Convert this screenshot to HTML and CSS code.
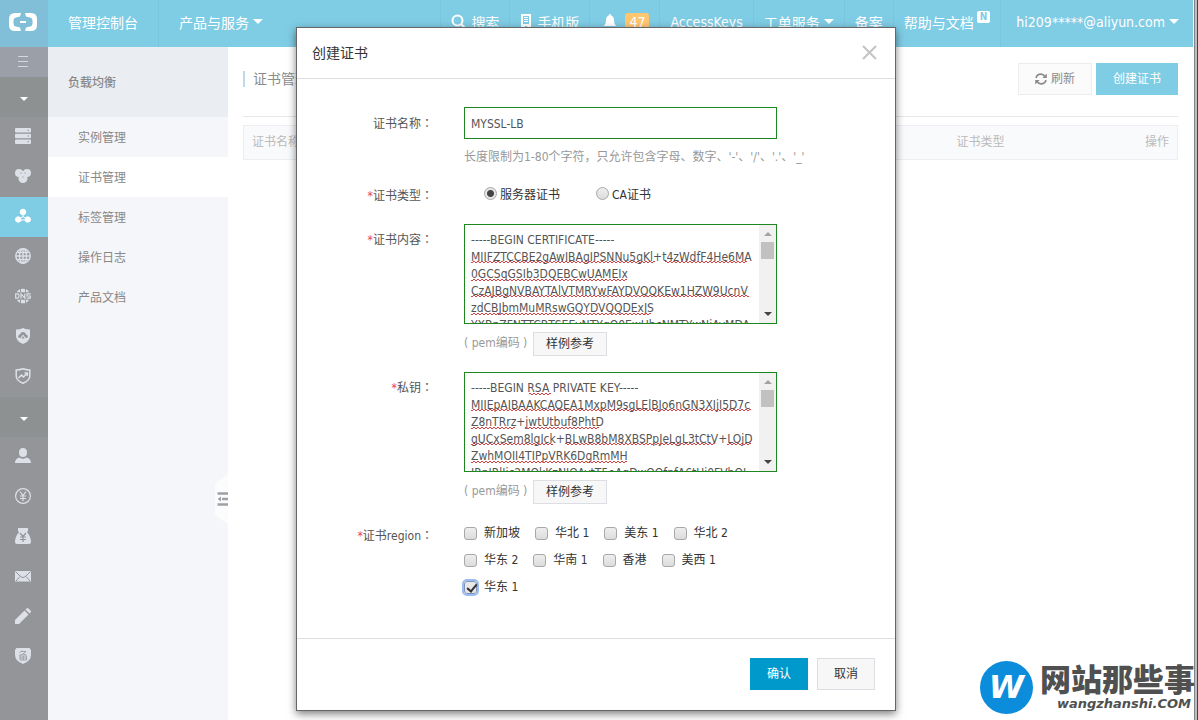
FILE: index.html
```html
<!DOCTYPE html>
<html lang="zh-CN">
<head>
<meta charset="utf-8">
<title>负载均衡 - 证书管理</title>
<link rel="stylesheet" href="styles.css">
</head>
<body>
<div class="window">
  <header class="topbar">
    <a class="brand" href="#" aria-label="首页">
      <svg width="28" height="18" viewBox="0 0 28 18" fill="#fff"><path d="M12 0H6Q0 0 0 6v6q0 6 6 6h6l-1-3.400-4-1Q4.500 13 4.500 10.500v-3Q4.500 5 7 4.400l4-1zM16 0h6q6 0 6 6v6q0 6-6 6h-6l1-3.400 4-1q2.500-.600 2.500-3.100v-3Q23.500 5 21 4.400l-4-1z"/><path d="M11 8h6v2h-6z"/></svg>
    </a>
    <nav class="nav-left">
      <a class="nav-item" href="#">管理控制台</a>
      <a class="nav-item" href="#">产品与服务<i class="caret"></i></a>
    </nav>
    <nav class="nav-right">
      <a class="nav-item" href="#"><svg class="lead" width="15" height="15" viewBox="0 0 15 15" fill="none" stroke="#fff" stroke-width="2"><circle cx="6.500" cy="6.500" r="5"/><path d="M10 10l4.500 4.500"/></svg>搜索</a>
      <a class="nav-item" href="#"><svg class="lead" width="12" height="15" viewBox="0 0 12 15"><path fill="#fff" fill-rule="evenodd" d="M1 0h10v15H1zM3 2v8h6V2zM5 12v1.500h2V12z"/><path d="M4 3.500h4M4 5.500h4M4 7.500h4" stroke="#fff"/></svg>手机版</a>
      <a class="nav-item" href="#"><svg class="bell" width="14" height="15" viewBox="0 0 14 15" fill="#fff"><path d="M7 0q1.300 0 1.300 1.500Q11 2.500 11 6q0 4.500 2.500 6H.500Q3 10.500 3 6q0-3.500 2.700-4.500Q5.700 0 7 0zM5 13h4q-.500 2-2 2t-2-2z"/></svg><span class="count">47</span></a>
      <a class="nav-item" href="#">AccessKeys</a>
      <a class="nav-item" href="#">工单服务<i class="caret"></i></a>
      <a class="nav-item" href="#">备案</a>
      <a class="nav-item" href="#">帮助与文档<span class="new">N</span></a>
      <a class="nav-item user" href="#">hi209*****@aliyun.com<i class="caret"></i></a>
    </nav>
  </header>

  <div class="layout">
    <nav class="rail" aria-label="产品">
      <button class="rail-cell menu" aria-label="菜单"><svg width="12" height="12" viewBox="0 0 12 12" stroke="#d3d7de"><path d="M1 .500h10M1 5.500h10M1 10.500h10"/></svg></button>
      <button class="rail-cell fold" aria-label="产品与服务"><i class="caret small"></i></button>
      <a class="rail-cell" href="#" aria-label="服务器"><svg width="16" height="16" viewBox="0 0 16 16"><g fill="#dde0e6"><rect width="16" height="4.600" rx="1"/><rect y="5.700" width="16" height="4.600" rx="1"/><rect y="11.400" width="16" height="4.600" rx="1"/></g><path d="M12.500 2.300h1.500M12.500 8h1.500M12.500 13.700h1.500" stroke="#939599"/></svg></a>
      <a class="rail-cell" href="#" aria-label="数据库"><svg width="16" height="16" viewBox="0 0 16 16" fill="#dde0e6"><circle cx="4" cy="5" r="4"/><circle cx="12" cy="5" r="4"/><circle cx="8" cy="10.500" r="4.500"/><path d="M4 3h8v6H4z"/><g fill="#a5a8ad"><circle cx="6" cy="5" r=".7"/><circle cx="10" cy="5" r=".7"/><circle cx="8" cy="9" r=".7"/></g></svg></a>
      <a class="rail-cell active" href="#" aria-label="负载均衡"><svg width="16" height="16" viewBox="0 0 16 16" fill="#fff" stroke="#fff"><circle cx="8" cy="4" r="2.800"/><circle cx="3.200" cy="11.500" r="2.700"/><circle cx="12.800" cy="11.500" r="2.700"/><path d="M8 4v4.500L3 12h10L8 8.500" fill="none"/></svg></a>
      <a class="rail-cell" href="#" aria-label="CDN"><svg width="16" height="16" viewBox="0 0 16 16" fill="none" stroke="#dde0e6" stroke-width="1.400"><circle cx="8" cy="8" r="7.200"/><ellipse cx="8" cy="8" rx="3.500" ry="7.200"/><path d="M8 1v14M1 8h14M2.500 4.500h11M2.500 11.500h11"/></svg></a>
      <a class="rail-cell" href="#" aria-label="DNS"><svg width="16" height="16" viewBox="0 0 16 16" fill="none" stroke="#dde0e6"><path d="M1.800 4.200a7.200 7.200 0 0 1 12.400 0zM1.800 11.800a7.200 7.200 0 0 0 12.400 0z" fill="#dde0e6" stroke="none"/><path d="M5.500 1v3.500M10.500 1v3.500M5.500 11.500V15M10.500 11.500V15" stroke="#939599" stroke-width=".9"/><path d="M.700 5.900v4.200h1.800q1.500 0 1.500-2.100T2.500 5.900zM6 10.700V5.900l3.800 4.200V5.400M15.700 5.900H12V8h3.300v2.100h-3.700" stroke-width="1.200"/></svg></a>
      <a class="rail-cell" href="#" aria-label="云盾"><svg width="16" height="16" viewBox="0 0 16 16"><path fill="#dde0e6" d="M8 0q3 1.500 7 1.500V8q0 5-7 8Q1 13 1 8V1.500Q5 1.500 8 0z"/><path fill="#939599" d="M3.200 9.500q-.500-2.500 1.800-3.300Q6 4 8 4t3 2.200q2.300.800 1.800 3.300l-2 .500L8 6.500 5.200 10z"/><path fill="#939599" d="M8 8l1.500 2.500h-3z"/></svg></a>
      <a class="rail-cell" href="#" aria-label="监控"><svg width="16" height="16" viewBox="0 0 16 16" fill="none" stroke="#dde0e6" stroke-width="1.500"><path d="M8 .800q3 1.200 6.800 1.200V8q0 4.500-6.800 7.300Q1.200 12.500 1.200 8V2Q5 2 8 .800z"/><path d="M3.500 10l3-3 2 2L12 5.200M9.500 5h2.800v3"/></svg></a>
      <button class="rail-cell fold" aria-label="用户中心"><i class="caret small"></i></button>
      <a class="rail-cell" href="#" aria-label="账号"><svg width="16" height="16" viewBox="0 0 16 16" fill="#dde0e6"><path d="M8 0q4 0 4 4.500Q12 9 8 9T4 4.500Q4 0 8 0z"/><path d="M0 15q0-4.500 4.500-5.500Q8 12 11.500 9.500 16 10.500 16 15z"/></svg></a>
      <a class="rail-cell" href="#" aria-label="费用"><svg width="16" height="16" viewBox="0 0 16 16" fill="none" stroke="#dde0e6" stroke-width="1.200"><circle cx="8" cy="8" r="7.400"/><path d="M5 3.500l3 4 3-4M8 7.500V13M5 8h6M5 10.500h6"/></svg></a>
      <a class="rail-cell" href="#" aria-label="续费"><svg width="16" height="16" viewBox="0 0 16 16"><path fill="#dde0e6" d="M3 0h10v3l-1 1q4 5 4 10 0 2-2 2H2q-2 0-2-2 0-5 4-10L3 3z"/><path d="M5 5l3 3.500L11 5M8 8.500V14M5 9h6M5 11.500h6" fill="none" stroke="#939599" stroke-width="1.200"/></svg></a>
      <a class="rail-cell" href="#" aria-label="消息"><svg width="16" height="16" viewBox="0 0 16 16"><path fill="#dde0e6" d="M0 3h16v10.500H0z"/><path d="M.500 3.500Q6 9.500 8 9.500t7.500-6M1 13l4-4.500M15 13l-4-4.500" fill="none" stroke="#939599"/></svg></a>
      <a class="rail-cell" href="#" aria-label="工单"><svg width="16" height="16" viewBox="0 0 16 16" fill="#dde0e6"><path d="M0 16v-4L9.500 2.500l4 4L4 16zM10.500 1.500l1-1q1-1 2 0l2 2q1 1 0 2l-1 1z"/></svg></a>
      <a class="rail-cell" href="#" aria-label="备案"><svg width="16" height="16" viewBox="0 0 16 16"><path fill="#dde0e6" d="M1.500 0h13L16 2v5q0 6-8 9Q0 13 0 7V2z"/><path d="M7 2.500L4.500 5M6 3.500h5L8 6l3.500 1M8 6L4 7.500M5 8h6.500v4H5zM5 10h6.500M8.200 8v4" fill="none" stroke="#939599" stroke-width=".8"/></svg></a>
    </nav>

    <aside class="panel">
      <h2 class="panel-title">负载均衡</h2>
      <a class="panel-item" href="#">实例管理</a>
      <a class="panel-item current" href="#">证书管理</a>
      <a class="panel-item" href="#">标签管理</a>
      <a class="panel-item" href="#">操作日志</a>
      <a class="panel-item" href="#">产品文档</a>
      <button class="collapse" aria-label="收起"><svg width="13" height="50" viewBox="0 0 13 50"><path fill="#fcfcfd" d="M13 0v50L0 41V9z"/><path d="M2.500 19.500H13M7 25h6M2.500 30.500H13" stroke="#9da0a6" stroke-width="2.500"/><path fill="#9da0a6" d="M2.500 25L6 22.500v5z"/></svg></button>
    </aside>

    <main class="main">
      <div class="page-head">
        <h1 class="page-title">证书管理</h1>
        <div class="page-actions">
          <button class="btn refresh"><svg width="12" height="12" viewBox="0 0 12 12" fill="none" stroke="#8c8c8c" stroke-width="1.700"><path d="M1 5q1-3.800 5-3.800 2.500 0 4 2.300M11 7q-1 3.800-5 3.800-2.500 0-4-2.300"/><path fill="#8c8c8c" stroke="none" d="M11.800.500v4.500H7.300zM.200 11.500V7h4.500z"/></svg>刷新</button>
          <button class="btn create">创建证书</button>
        </div>
      </div>
      <table class="list">
        <thead><tr><th class="col-name">证书名称</th><th class="col-type">证书类型</th><th class="col-op">操作</th></tr></thead>
      </table>
    </main>
  </div>

  <div class="watermark">
    <span class="mark">W</span>
    <span class="mark-text"><strong>网站那些事</strong><small>wangzhanshi.COM</small></span>
  </div>

  <div class="overlay">
    <form class="dialog" role="dialog" aria-labelledby="dlg-title">
      <div class="dialog-head">
        <h2 class="dialog-title" id="dlg-title">创建证书</h2>
        <button type="button" class="close" aria-label="关闭"><svg width="15" height="15" viewBox="0 0 15 15" stroke="#c4c4c4" stroke-width="2"><path d="M1 1l13 13M14 1L1 14"/></svg></button>
      </div>
      <div class="dialog-body">
        <div class="row">
          <label class="label tall" for="name">证书名称<span class="colon" lang="zh-TW">：</span></label>
          <div class="field">
            <input class="text" id="name" type="text" value="MYSSL-LB">
            <p class="hint">长度限制为1-80个字符，只允许包含字母、数字、'-'、'/'、'.'、'_'</p>
          </div>
        </div>
        <div class="row">
          <span class="label"><b class="req">*</b>证书类型<span class="colon" lang="zh-TW">：</span></span>
          <div class="field radios">
            <label class="radio"><input type="radio" name="type" checked>服务器证书</label>
            <label class="radio"><input type="radio" name="type">CA证书</label>
          </div>
        </div>
        <div class="row">
          <label class="label area-label" for="cert"><b class="req">*</b>证书内容<span class="colon" lang="zh-TW">：</span></label>
          <div class="field">
            <div class="area">
              <textarea id="cert" spellcheck="false">-----BEGIN CERTIFICATE-----
MIIFZTCCBE2gAwIBAgIPSNNu5gKl+t4zWdfF4He6MA
0GCSqGSIb3DQEBCwUAMEIx
CzAJBgNVBAYTAlVTMRYwFAYDVQQKEw1HZW9UcnV
zdCBJbmMuMRswGQYDVQQDExJS
YXBpZFNTTCBTSEEyNTYgQ0EwHhcNMTYwNjAyMDA</textarea>
              <svg class="squiggles" width="296" height="98" fill="url(#wave)"><defs><pattern id="wave" width="4" height="2" patternUnits="userSpaceOnUse"><path fill="#dc4040" d="M0 0h2v1H0zM2 1h2v1H2z"/></pattern></defs><path d="M6 36h184v2H6zM200 36h82v2h-82zM6 54h156v2H6zM6 70h278v2H6zM6 88h180v2H6z"/></svg>
              <span class="scroll" aria-hidden="true"><i class="up"></i><i class="thumb"></i><i class="down"></i></span>
            </div>
            <div class="sample"><span>( pem编码 )</span><button type="button" class="btn mini">样例参考</button></div>
          </div>
        </div>
        <div class="row">
          <label class="label area-label" for="key"><b class="req">*</b>私钥<span class="colon" lang="zh-TW">：</span></label>
          <div class="field">
            <div class="area">
              <textarea id="key" spellcheck="false">-----BEGIN RSA PRIVATE KEY-----
MIIEpAIBAAKCAQEA1MxpM9sgLElBJo6nGN3XIjI5D7c
Z8nTRrz+jwtUtbuf8PhtD
gUCxSem8lgIck+BLwB8bM8XBSPpJeLgL3tCtV+LOjD
ZwhMOII4TIPpVRK6DgRmMH
JRpIRlJic2MOkKzNIOAvtT5eAgDwQOfnfA6tUi0FVhOI</textarea>
              <svg class="squiggles" width="296" height="98" fill="url(#wave)"><path d="M64 20h22v2H64zM6 36h280v2H6zM6 54h44v2H6zM60 54h74v2H60zM6 70h82v2H6zM100 70h150v2H100zM262 70h24v2h-24zM6 88h156v2H6z"/></svg>
              <span class="scroll" aria-hidden="true"><i class="up"></i><i class="thumb"></i><i class="down"></i></span>
            </div>
            <div class="sample"><span>( pem编码 )</span><button type="button" class="btn mini">样例参考</button></div>
          </div>
        </div>
        <div class="row">
          <span class="label area-label"><b class="req">*</b>证书region<span class="colon" lang="zh-TW">：</span></span>
          <div class="field regions">
            <label class="check"><input type="checkbox">新加坡</label>
            <label class="check"><input type="checkbox">华北 1</label>
            <label class="check"><input type="checkbox">美东 1</label>
            <label class="check"><input type="checkbox">华北 2</label>
            <label class="check"><input type="checkbox">华东 2</label>
            <label class="check"><input type="checkbox">华南 1</label>
            <label class="check"><input type="checkbox">香港</label>
            <label class="check"><input type="checkbox">美西 1</label>
            <label class="check"><input type="checkbox" checked>华东 1</label>
          </div>
        </div>
      </div>
      <div class="dialog-foot">
        <button type="button" class="btn ok">确认</button>
        <button type="button" class="btn cancel">取消</button>
      </div>
    </form>
  </div>
</div>
</body>
</html>
```

FILE: styles.css
```css
* { box-sizing: border-box; }

body, button, input, textarea {
  font-family: "DejaVu Sans Condensed", "Noto Sans CJK SC", sans-serif;
  font-size: 12px;
}
body { margin: 0; background: #fff; color: #333; }
a { color: inherit; text-decoration: none; }
button { border: 0; margin: 0; padding: 0; background: none; color: inherit; cursor: pointer; }
h1, h2, p { margin: 0; font-weight: 400; }
svg { display: block; flex: none; }

.window {
  position: relative;
  display: flex;
  flex-direction: column;
  min-height: 100vh;
  border-right: 1px solid #444;
  box-shadow: inset -2px 0 #bdbdbd, inset -3px 0 #858585;
  padding-right: 4px;
}

/* top bar */
.topbar { display: flex; height: 47px; background: #7fcce5; color: #fff; font-size: 14px; }
.brand { display: flex; align-items: center; justify-content: center; width: 48px; padding: 0 2px 3px 0; background: #80bfd7; }
.nav-left, .nav-right { display: flex; }
.nav-right { margin-left: auto; }
.nav-item { display: flex; align-items: center; padding: 0 10px 4px; white-space: nowrap; }
.nav-left .nav-item { padding: 0 20px 4px; border-right: 1px solid #79c5df; }
.nav-left .nav-item:last-child { border: 0; }
.nav-right .nav-item { border-left: 1px solid #79c5df; }
.nav-right .user { padding: 0 14px 4px 15px; }
.lead { margin-right: 5px; }
.bell { margin: 0 8px 0 3px; }
.caret { margin-left: 4px; border: 5px solid transparent; border-top-color: #fff; border-bottom: 0; }
.caret.small { margin: 0; border-width: 4px; border-bottom: 0; }
.count { padding: 0 4px; border-radius: 3px; background: #ffc670; line-height: 18px; }
.new { align-self: flex-start; margin: 11px 0 0 3px; padding: 0 3px; border-radius: 2px; background: #fff; color: #7fcce5; font-size: 10px; font-weight: 700; line-height: 12px; }

/* left rail */
.layout { display: flex; flex: 1; }
.rail { width: 48px; background: #939599; }
.rail-cell { display: flex; align-items: center; justify-content: center; width: 48px; height: 40px; padding: 0 2px 2px 0; }
.rail-cell.menu { height: 30px; padding-bottom: 0; background: #9a9fa8; }
.rail-cell.fold { padding: 3px 0 0; background: #8e9192; }
.rail-cell.active { background: #7fcce5; }

/* second level menu */
.panel { position: relative; width: 180px; background: #f5f6f9; color: #888; }
.panel-title { height: 70px; padding-left: 20px; background: #eaedf1; font-size: 12px; font-weight: 500; line-height: 72px; }
.panel-item { display: block; height: 40px; padding-left: 30px; line-height: 42px; }
.panel-item.current { background: #fff; }
.collapse { position: absolute; right: 0; top: 427px; }

/* page */
.main { flex: 1; padding: 0 15px; color: #8c8c8c; }
.page-head { display: flex; align-items: center; justify-content: space-between; height: 70px; padding-bottom: 6px; border-bottom: 1px solid #e6e7ea; }
.page-title { padding-left: 8px; border-left: 2px solid #bfd8ea; font-size: 14px; line-height: 16px; }
.page-actions { display: flex; gap: 4px; }
.btn { display: flex; align-items: center; justify-content: center; height: 32px; padding: 0 16px; border: 1px solid #dcdee3; background: #f7f7f7; line-height: 16px; }
.refresh { gap: 4px; border-color: #ededed; background: #fbfbfb; }
.create { border-color: #7fcce5; background: #7fcce5; color: #fff; }
.list { width: 100%; margin-top: 8px; border: 1px solid #eceef2; border-spacing: 0; background: #f9fafc; color: #bbb; }
.list th { padding: 0 8px; font-weight: 400; line-height: 33px; text-align: left; }
.list .col-name { width: 75.5%; }
.list .col-op { text-align: right; }

/* watermark */
.watermark { position: absolute; right: 2px; bottom: 6px; display: flex; align-items: center; gap: 7px; color: #505050; }
.mark { width: 53px; border-radius: 50%; background: #0b8ddb; color: #fff; font: italic 700 32px/53px "DejaVu Sans", sans-serif; text-align: center; }
.mark-text { display: flex; flex-direction: column; align-items: flex-end; }
.mark-text strong { font-size: 31px; font-weight: 900; line-height: 32px; }
.mark-text small { padding-right: 4px; font: italic 700 13px/16px "DejaVu Sans", sans-serif; }

/* dialog */
.overlay { position: absolute; inset: 0 5px 0 0; display: flex; align-items: flex-start; justify-content: center; padding-top: 27px; }
.dialog { width: 600px; border: 1px solid #666; background: #fff; box-shadow: 0 3px 8px rgba(0, 0, 0, .5); }
.dialog-head { display: flex; align-items: center; justify-content: space-between; height: 51px; padding: 0 18px 2px 15px; border-bottom: 1px solid #dfdfdf; }
.dialog-title { font-size: 14px; }
.dialog-body { display: flex; flex-direction: column; gap: 16px; padding: 28px 0 37px; }
.row { display: flex; }
.label { width: 136px; padding-top: 1px; line-height: 24px; text-align: right; color: #555; white-space: nowrap; }
.label.tall { line-height: 32px; }
.label.area-label { line-height: 30px; }
.colon { font-family: "Noto Sans CJK TC", sans-serif; line-height: 1; }
.req { color: #e8443c; font-weight: 400; }
.field { width: 313px; margin-left: 31px; }
.text { display: block; width: 100%; height: 32px; padding: 2px 6px 0; border: 1px solid #1e861e; background: #fff; color: #555; outline: 0; }
.hint { margin-top: 8px; color: #999; line-height: 20px; white-space: nowrap; }

.radios { display: flex; gap: 36px; padding-left: 20px; line-height: 25px; }
.radio { display: flex; align-items: center; gap: 3px; }
input[type="radio"], input[type="checkbox"] { appearance: none; flex: none; width: 13px; height: 13px; margin: 0; border: 1px solid #a8a8a8; background: linear-gradient(#eee, #dcdcdc); }
input[type="radio"] { margin-bottom: 4px; border-radius: 50%; }
input[type="radio"]:checked { background: radial-gradient(circle, #444 3px, #e6e6e6 4px); }

.area { position: relative; height: 100px; border: 1px solid #1e861e; }
.area textarea { display: block; width: 100%; height: 98px; padding: 7px 17px 0 6px; border: 0; outline: 0; resize: none; overflow: hidden; background: transparent; color: #555; line-height: 17px; white-space: pre; }
.squiggles { position: absolute; left: 0; top: 0; pointer-events: none; }
.scroll { position: absolute; right: 0; top: 0; bottom: 0; display: flex; flex-direction: column; align-items: center; width: 17px; padding: 7px 0; background: #f1f1f1; }
.up { border: 4px solid transparent; border-top: 0; border-bottom-color: #a3a3a3; }
.thumb { width: 13px; height: 17px; margin-top: 6px; background: #c1c1c1; }
.down { margin-top: auto; border: 4px solid transparent; border-bottom: 0; border-top-color: #444; }

.sample { display: flex; align-items: flex-start; justify-content: space-between; width: 143px; margin-top: 8px; color: #999; line-height: 22px; }
.mini { height: 24px; padding: 0 12px; color: #333; }

.regions { display: flex; flex-wrap: wrap; column-gap: 15px; line-height: 27px; }
.check { display: flex; align-items: center; gap: 7px; }
input[type="checkbox"] { border-radius: 3px; }
input[type="checkbox"]:checked {
  position: relative;
  border-color: #7d93b8;
  background: #e8e8e8;
  outline: 2px solid #9dbcf0;
}
input[type="checkbox"]:checked::after {
  content: "";
  position: absolute;
  left: 4px;
  top: 0;
  width: 4px;
  height: 8px;
  border: solid #333;
  border-width: 0 2px 2px 0;
  transform: rotate(40deg);
}

.dialog-foot { display: flex; justify-content: flex-end; gap: 9px; padding: 19px 20px 20px; border-top: 1px solid #dfdfdf; }
.ok { border-color: #09c; background: #09c; color: #fff; }
```
